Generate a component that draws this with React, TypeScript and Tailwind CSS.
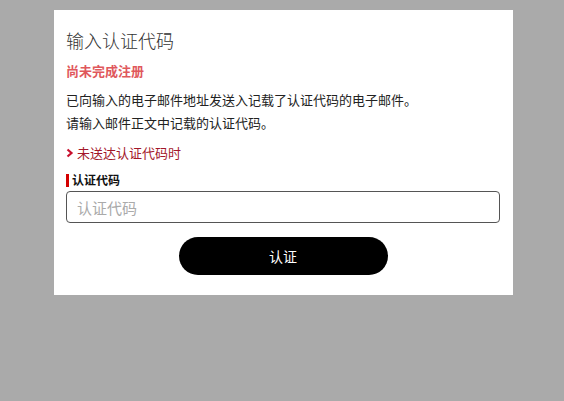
import React from "react";

export default function App() {
  const font = { fontFamily: '"Noto Sans CJK SC", "Noto Sans", sans-serif' };
  return (
    <div className="min-h-[401px] w-full bg-[#aaaaaa] pt-[10px]" style={font}>
      <div className="ml-[54px] w-[459px] bg-white pl-[12px] pr-[13px] pt-[18px] pb-[20px]">
        <h1 className="text-[18px] leading-[24px] text-[#333333] font-light">输入认证代码</h1>
        <p className="mt-[10px] text-[13px] leading-[18px] font-bold text-[#e0585c]">尚未完成注册</p>
        <p className="mt-[8px] text-[13px] leading-[23px] text-[#222222]">
          已向输入的电子邮件地址发送入记载了认证代码的电子邮件。
          <br />
          请输入邮件正文中记载的认证代码。
        </p>
        <a className="mt-[10px] flex items-center text-[13px] leading-[18px] text-[#a3172a]">
          <svg width="8" height="10" viewBox="0 0 8 10" className="mr-[3px]">
            <polyline points="1.5,1.5 5.5,5 1.5,8.5" fill="none" stroke="#c8102e" strokeWidth="2.2" />
          </svg>
          未送达认证代码时
        </a>
        <div className="mt-[10px] flex items-center text-[12px] leading-[16px] font-bold text-[#111111]">
          <span className="mr-[3px] inline-block h-[13px] w-[3px] bg-[#d40000]" />
          认证代码
        </div>
        <input
          className="mt-[3px] block h-[32px] w-full rounded-[4px] border border-[#555555] px-[10px] text-[15px] text-[#333] placeholder:text-[#aaaaaa] outline-none"
          placeholder="认证代码"
          style={font}
        />
        <div className="mt-[14px] flex justify-center">
          <button className="h-[38px] w-[209px] rounded-full bg-black text-[14px] text-white" style={font}>
            认证
          </button>
        </div>
      </div>
    </div>
  );
}
